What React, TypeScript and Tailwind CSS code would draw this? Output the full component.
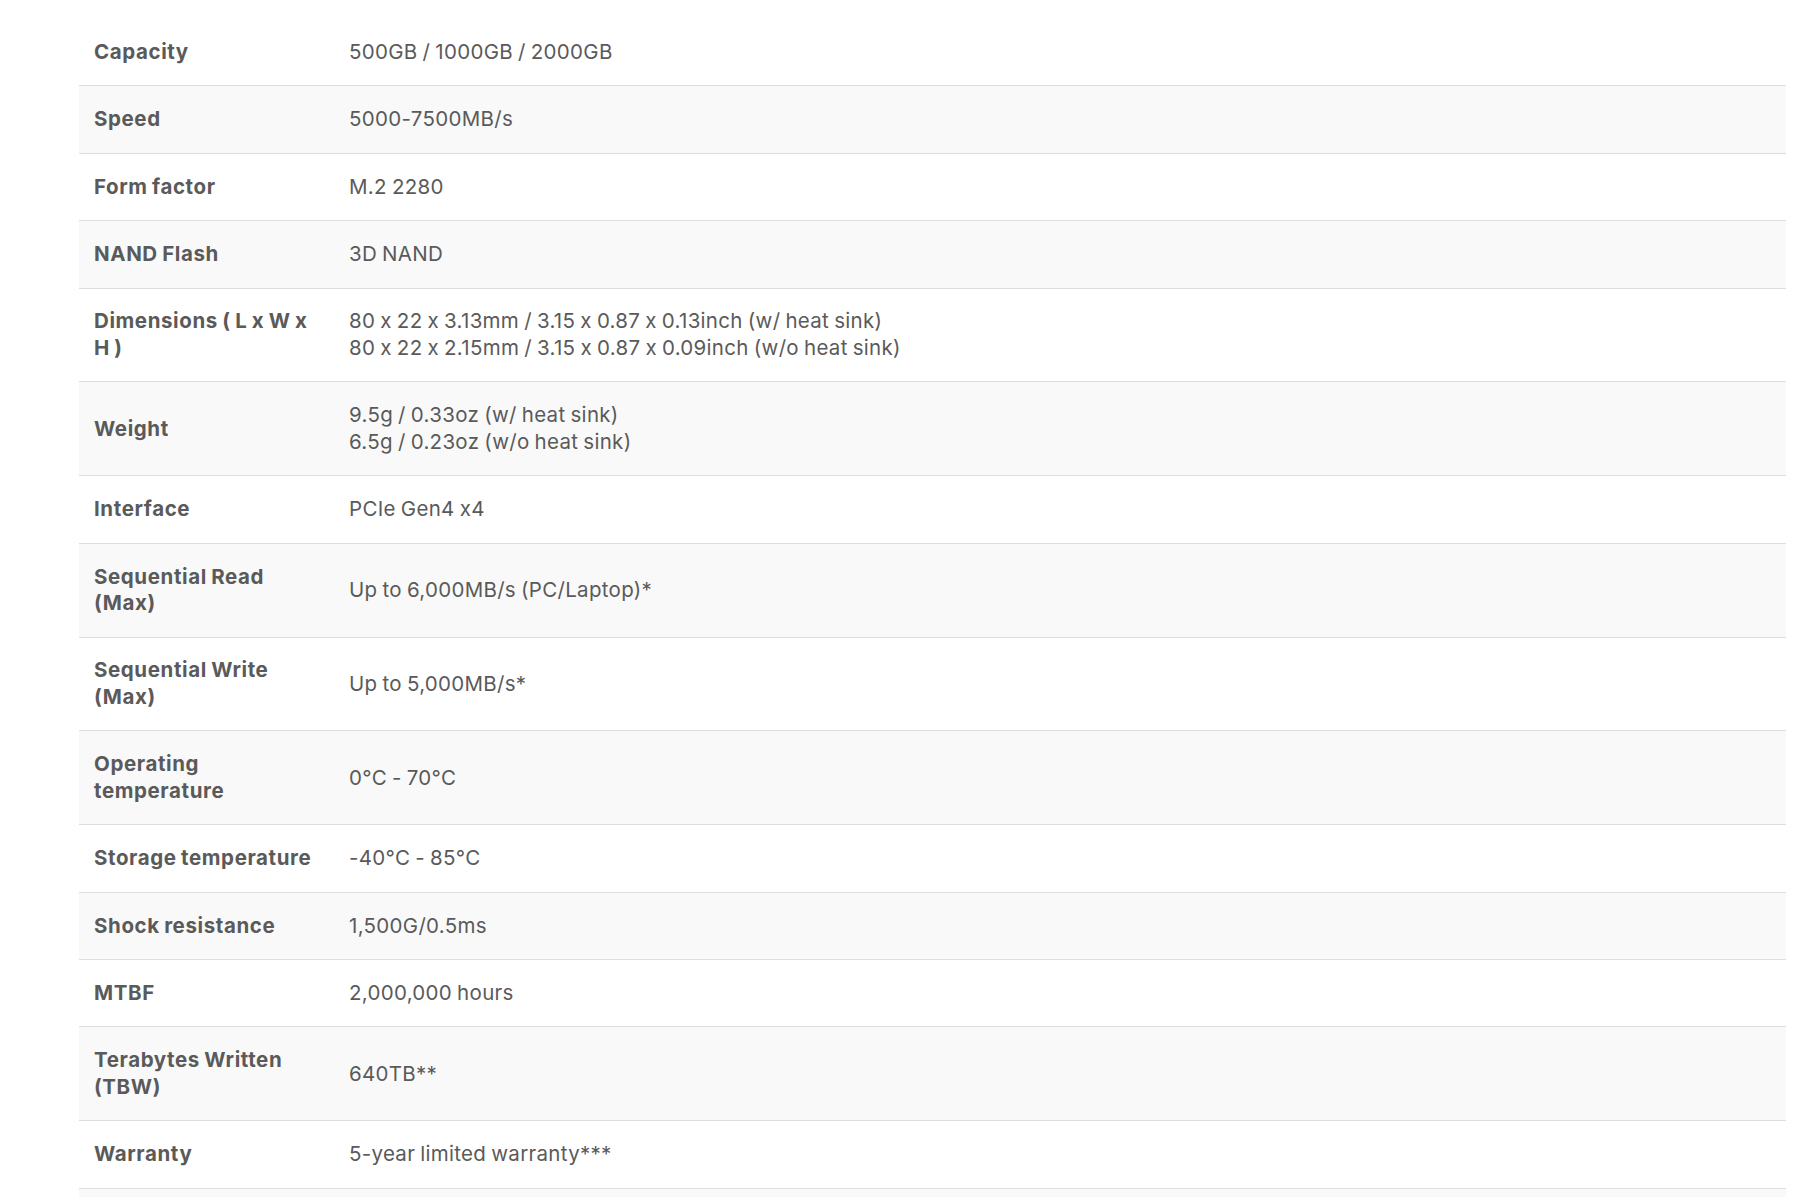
const specs: { label: string[]; value: string[] }[] = [
  { label: ['Capacity'], value: ['500GB / 1000GB / 2000GB'] },
  { label: ['Speed'], value: ['5000-7500MB/s'] },
  { label: ['Form factor'], value: ['M.2 2280'] },
  { label: ['NAND Flash'], value: ['3D NAND'] },
  {
    label: ['Dimensions ( L x W x', 'H )'],
    value: [
      '80 x 22 x 3.13mm / 3.15 x 0.87 x 0.13inch (w/ heat sink)',
      '80 x 22 x 2.15mm / 3.15 x 0.87 x 0.09inch (w/o heat sink)',
    ],
  },
  { label: ['Weight'], value: ['9.5g / 0.33oz (w/ heat sink)', '6.5g / 0.23oz (w/o heat sink)'] },
  { label: ['Interface'], value: ['PCIe Gen4 x4'] },
  { label: ['Sequential Read', '(Max)'], value: ['Up to 6,000MB/s (PC/Laptop)*'] },
  { label: ['Sequential Write', '(Max)'], value: ['Up to 5,000MB/s*'] },
  { label: ['Operating', 'temperature'], value: ['0°C - 70°C'] },
  { label: ['Storage temperature'], value: ['-40°C - 85°C'] },
  { label: ['Shock resistance'], value: ['1,500G/0.5ms'] },
  { label: ['MTBF'], value: ['2,000,000 hours'] },
  { label: ['Terabytes Written', '(TBW)'], value: ['640TB**'] },
  { label: ['Warranty'], value: ['5-year limited warranty***'] },
];

function Lines({ lines }: { lines: string[] }) {
  return (
    <>
      {lines.map((l, i) => (
        <div key={i} className="whitespace-nowrap">
          {l}
        </div>
      ))}
    </>
  );
}

export default function App() {
  return (
    <div
      className="min-h-screen bg-white pt-[19px] pl-[79px] pr-[10px] text-[#5a5a5a] [font-feature-settings:'calt'_0]"
      style={{ fontFamily: 'Inter, "Liberation Sans", sans-serif' }}
    >
      <table className="w-full border-collapse text-[20.5px] leading-[26.5px]">
        <tbody>
          {specs.map((row, i) => (
            <tr
              key={i}
              className={
                (i % 2 === 1 ? 'bg-[#f9f9f9] ' : 'bg-white ') + 'border-b border-[#dedede]'
              }
            >
              <td className="w-[255px] py-[19.95px] pl-[15px] pr-[10px] align-middle font-bold tracking-[0.6px] [word-spacing:-1px] text-[#5a5a5a]">
                <Lines lines={row.label} />
              </td>
              <td className="py-[19.95px] pl-[15px] align-middle font-normal tracking-[0.3px] [word-spacing:-1px]">
                <Lines lines={row.value} />
              </td>
            </tr>
          ))}
          <tr className="bg-[#f9f9f9]">
            <td className="h-[67px]" />
            <td className="h-[67px]" />
          </tr>
        </tbody>
      </table>
    </div>
  );
}
